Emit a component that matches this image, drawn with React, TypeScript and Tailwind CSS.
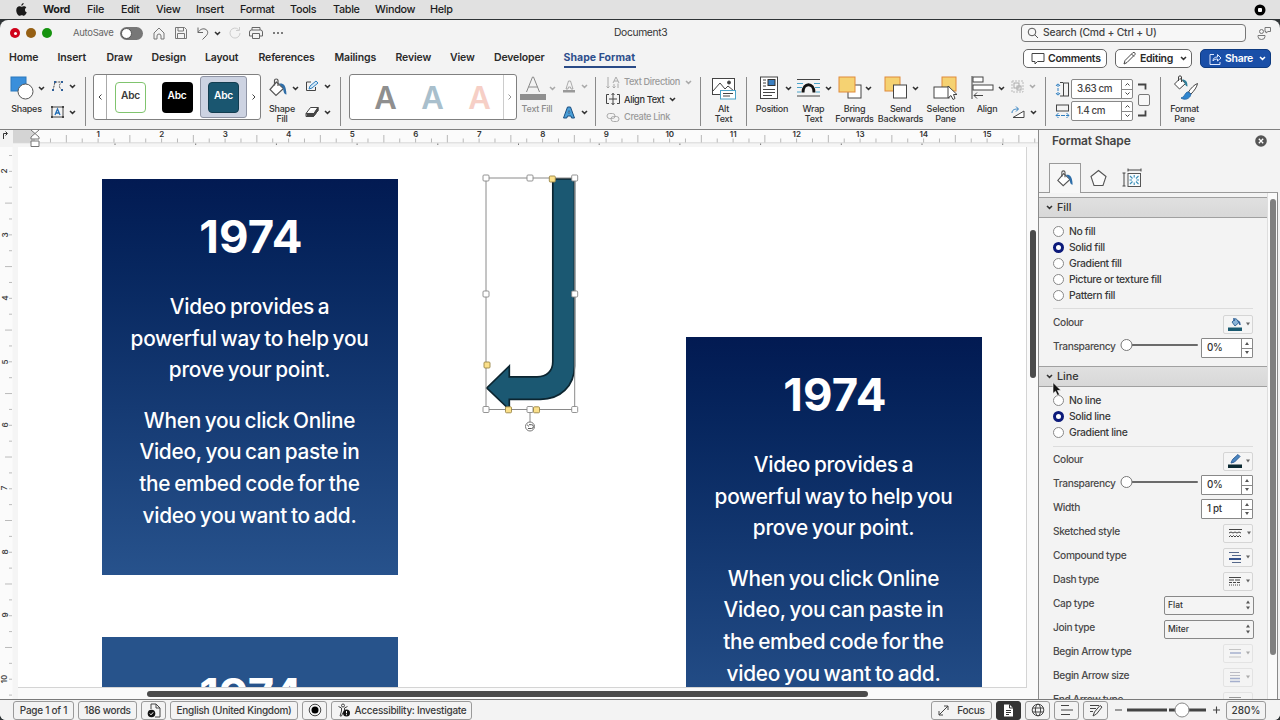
import type { ReactNode } from "react";

const cx = (...c: (string | undefined | false)[]) => c.filter(Boolean).join(" ");

function Svg({ w, h, children, className }: { w: number; h: number; children: ReactNode; className?: string }) {
  return (
    <svg width={w} height={h} viewBox={`0 0 ${w} ${h}`} fill="none" stroke="#444" strokeWidth="1" className={cx("shrink-0 block", className)}>
      {children}
    </svg>
  );
}

function Chev({ c = "#333", className }: { c?: string; className?: string }) {
  return (
    <Svg w={7} h={5} className={className}>
      <path d="M1 1l2.500 2.400L6 1" stroke={c} strokeWidth="1.500" />
    </Svg>
  );
}

/* ---------- menu bar ---------- */
const menus: [string, string][] = [
  ["Word", "w-[44px] font-bold"], ["File", "w-[34px]"], ["Edit", "w-[35px]"], ["View", "w-[40px]"],
  ["Insert", "w-[44px]"], ["Format", "w-[50px]"], ["Tools", "w-[43px]"], ["Table", "w-[42px]"],
  ["Window", "w-[55px]"], ["Help", "w-[30px]"],
];

function MenuBar() {
  return (
    <div className="flex h-[19px] items-center bg-[#e1e1e1] pl-4 text-[10.800px] font-medium tracking-[-0.3px] text-[#1c1c1c]">
      <svg width="11" height="13" viewBox="0 0 22 26" fill="#1a1a1a" className="mr-4">
        <path d="M15.300 0c.2 2.600-2 5.400-4.700 5.400C10.300 2.800 12.700.2 15.300 0zM11.200 7.500c1.200 0 2.600-1.200 4.800-1.200 1.800 0 3.600 1 4.700 2.600-4.100 2.400-3.400 8 .8 9.700-1 2.900-3.300 6.900-5.700 6.900-1.700 0-2.300-1-4.300-1s-2.700 1-4.300 1C4 25.500.5 19.400.5 14.300c0-5.200 3.300-7.900 6.400-7.900 2 0 3.200 1.100 4.300 1.100z" />
      </svg>
      {menus.map(([t, c]) => (
        <span key={t} className={cx("shrink-0 whitespace-nowrap pt-[1px]", c)}>{t}</span>
      ))}
      <Svg w={12} h={12} className="ml-auto mr-[14px]">
        <circle cx="6" cy="6" r="5.500" fill="#000" stroke="none" />
        <rect x="4" y="4" width="4" height="4" rx="1" fill="#fff" stroke="none" />
      </Svg>
    </div>
  );
}

/* ---------- title bar ---------- */
function TitleBar() {
  return (
    <div className="flex h-[26px] items-center pl-[10px]">
      <div className="flex w-[63px] gap-[6px]">
        <span className="flex size-[10px] items-center justify-center rounded-full bg-[#d0021b]"><span className="size-[3px] rounded-full bg-white" /></span>
        <span className="size-[10px] rounded-full bg-[#966014]" />
        <span className="size-[10px] rounded-full bg-[#16930f]" />
      </div>
      <span className="w-[47px] whitespace-nowrap text-[9.500px] tracking-[-0.3px] text-[#666]">AutoSave</span>
      <span className="flex h-[13px] w-[23px] items-center rounded-full bg-[#777] p-px"><span className="size-[11px] rounded-full border border-[#555] bg-white" /></span>
      <Svg w={12} h={13} className="ml-[10px]"><path d="M1 6L6 1l5 5v6H8V9a2 2 0 0 0-4 0v3H1z" stroke="#777" /></Svg>
      <Svg w={12} h={12} className="ml-[10px]"><path d="M.5.500h9l2 2v9H.5zM3 .5v3.500h5.500V.5M2.500 11.500v-5h7v5" stroke="#777" /></Svg>
      <Svg w={12} h={13} className="ml-[10px]"><path d="M1 .5V5.500h5M1 5.500C3 2 6.500 1 9 2.500c2.500 1.700 2 4.500 0 6.500l-3.500 3.500" stroke="#666" /></Svg>
      <Chev className="ml-[5px]" />
      <Svg w={12} h={12} className="ml-[8px]"><path d="M9.500 2.500A5 5 0 1 0 11 6M10.500 0v3.500H7" stroke="#ccc" /></Svg>
      <Svg w={14} h={12} className="ml-[8px]"><path d="M3 3V.5h8V3M3 9H.5V5a2 2 0 0 1 2-2h9a2 2 0 0 1 2 2v4H11M3.500 6.500h7v5h-7z" stroke="#666" /></Svg>
      <Svg w={12} h={4} className="ml-[9px]"><path d="M1 2h2M5 2h2M9 2h2" strokeWidth="1.600" stroke="#555" /></Svg>
      <span className="ml-[330px] w-[60px] whitespace-nowrap text-[10.300px] tracking-[-0.35px] text-[#333]">Document3</span>
      <div className="ml-[347px] flex h-[18px] w-[225px] items-center rounded border border-[#777] bg-[#f7f7f7] pl-[5px] text-[10.300px] font-medium tracking-[-0.2px] text-[#444]">
        <Svg w={12} h={12} className="mr-[4px]"><circle cx="5" cy="5" r="3.800" stroke="#555" /><path d="M7.800 7.800L11 11" stroke="#555" /></Svg>
        Search (Cmd + Ctrl + U)
      </div>
      <Svg w={15} h={14} className="ml-[11px]">
        <circle cx="4.500" cy="5.500" r="2" stroke="#777" /><path d="M1 9.500h7v1a3.500 3 0 0 1-7 0zM8 1.500h5.500v4H11L9 7V5.500H8z" stroke="#777" />
      </Svg>
    </div>
  );
}

const tabs: [string, string][] = [
  ["Home", "w-[48.500px]"], ["Insert", "w-[49px]"], ["Draw", "w-[45px]"], ["Design", "w-[53.500px]"], ["Layout", "w-[53.500px]"],
  ["References", "w-[76px]"], ["Mailings", "w-[61px]"], ["Review", "w-[54.500px]"], ["View", "w-[44px]"], ["Developer", "w-[69.500px]"],
];

function TabRow() {
  return (
    <div className="flex h-[24px] items-start pl-[9px] text-[10.500px] font-semibold tracking-[-0.15px] text-[#2a2a2a]">
      {tabs.map(([t, c]) => (
        <span key={t} className={cx("shrink-0 whitespace-nowrap pt-[4px]", c)}>{t}</span>
      ))}
      <span className="h-[22px] w-[72px] whitespace-nowrap border-b-2 border-[#2a4a86] pt-[4px] font-bold tracking-[0.05px] text-[#2d4e8c]">Shape Format</span>
      <div className="ml-auto mr-[9px] flex gap-[8px] pt-[3px] tracking-[-0.3px]">
        <span className="flex h-[19px] w-[84px] items-center rounded-[5px] border border-[#666] bg-white pl-[7px]">
          <Svg w={14} h={13} className="mr-[3px]"><path d="M1 1.500h12v8H6.500L4 12V9.500H1z" /></Svg>Comments
        </span>
        <span className="flex h-[19px] w-[77px] items-center rounded-[5px] border border-[#666] bg-white pl-[7px]">
          <Svg w={13} h={13} className="mr-[4px]"><path d="M1 12l1-3.500 8-8c1.500-.5 2.500.500 2 2l-8 8zM8.500 2l2.500 2.500" /></Svg>Editing<Chev className="ml-[7px]" />
        </span>
        <span className="flex h-[19px] w-[71px] items-center rounded-[5px] border border-[#0e3a80] bg-[#1a4fa8] pl-[8px] text-white">
          <Svg w={13} h={12} className="mr-[3px]"><path d="M5 1.500H1v10h10V9M4 8c0-3 2-4 4.500-4V1.500L12 5 8.500 8V6C6.500 6 5 6.500 4 8z" stroke="#dfe8ff" /></Svg>Share<Chev c="#fff" className="ml-[6px]" />
        </span>
      </div>
    </div>
  );
}

/* ---------- ribbon ---------- */
function Big({ w, pad, icon, chev, lines, dim }: { w: string; pad: string; icon: ReactNode; chev?: string; lines: string[]; dim?: boolean }) {
  return (
    <div className={cx("flex shrink-0 flex-col", w)}>
      <div className={cx("flex h-[28px] items-center", pad)}>
        {icon}
        {chev && <Chev className={chev} c={dim ? "#aaa" : "#333"} />}
      </div>
      <div className={cx("flex flex-col items-center pt-[2px] text-[9px] font-medium leading-[9.500px] tracking-[-0.25px]", dim ? "text-[#8c8c8c]" : "text-[#333]")}>
        {lines.map((l) => <span key={l} className="whitespace-nowrap">{l}</span>)}
      </div>
    </div>
  );
}

function Pair({ w, top, bottom, dimTop }: { w: string; top: ReactNode; bottom: ReactNode; dimTop?: boolean }) {
  return (
    <div className={cx("flex shrink-0 flex-col", w)}>
      <div className="flex h-[26px] items-center gap-[5px] pb-[2px]">{top}<Chev c={dimTop ? "#aaa" : "#333"} /></div>
      <div className="flex h-[24px] items-center gap-[5px]">{bottom}<Chev /></div>
    </div>
  );
}

const Sep = () => <span className="mt-[3px] h-[49px] w-px shrink-0 bg-[#8a8a8a]" />;

function Bucket({ s }: { s: number }) {
  return (
    <svg width={s} height={s} viewBox="0 0 20 20" fill="none" className="shrink-0">
      <path d="M8.500 4L2 11.500l6 6 7.500-7L8.500 4z" fill="#fff" stroke="#555" strokeWidth="1.200" />
      <path d="M6.500 7.500V2.500c0-2 3.500-2 3.500 0V8" stroke="#555" strokeWidth="1.200" />
      <path d="M11 5.500c4-.5 7 .5 7.500 11-3-.5-3-4-3.500-6.500z" fill="#2f6ea8" />
    </svg>
  );
}

function WordArt({ c }: { c: string }) {
  return <span className={cx("w-[47px] text-center text-[31px] font-semibold leading-none", c)}>A</span>;
}

function Spin({ v }: { v: string }) {
  return (
    <div className="flex h-[20px] w-[62px] rounded-[2px] border border-[#888] bg-white">
      <span className="flex flex-1 items-center whitespace-nowrap pl-[5px] text-[9.800px] font-medium tracking-[-0.4px] text-[#444]">{v}</span>
      <span className="flex w-[11px] flex-col border-l border-[#888]">
        <span className="flex flex-1 items-center justify-center border-b border-[#888]"><Svg w={5} h={3}><path d="M.5 2.500l2-2 2 2" /></Svg></span>
        <span className="flex flex-1 items-center justify-center"><Svg w={5} h={3}><path d="M.5.500l2 2 2-2" /></Svg></span>
      </span>
    </div>
  );
}

function Ribbon() {
  return (
    <div className="flex h-[59px] items-start pt-[4px]">
      <div className="w-[46px] shrink-0 pl-[3px]">
        <Big w="w-[47px]" pad="pl-[7px]" lines={["Shapes"]} chev="ml-[4px]" icon={
          <Svg w={24} h={24}><rect x="1" y="1" width="15" height="14" fill="#3a8fdb" stroke="#2a78bd" /><circle cx="15.500" cy="15.500" r="7.500" fill="#fff" stroke="#555" /></Svg>} />
      </div>
      <Pair w="w-[39px] pl-[5px]"
        top={<Svg w={13} h={12}><path d="M2 10.500L4 2h7c-4 3-3 6 .5 8.500" strokeDasharray="2 1" /><path d="M1 10h2M3 2h2M10 2h2M10 10h2" stroke="#2f5f98" strokeWidth="2" /></Svg>}
        bottom={<Svg w={13} h={12}><rect x="1" y="1" width="11" height="10" /><path d="M4 9l2.500-6L9 9M5 7h3" stroke="#2470b8" strokeWidth="1.300" /><path d="M0 1h2M11 1h2M0 11h2M11 11h2" strokeWidth="2" /></Svg>} />
      <Sep />
      <div className="ml-[7px] flex h-[46px] w-[168px] shrink-0 items-stretch overflow-hidden rounded-[3px] border border-[#808080] bg-white text-[10.200px] font-semibold tracking-[-0.2px]">
        <span className="flex w-[13px] items-center justify-center border-r border-[#aaa]"><Svg w={4} h={6}><path d="M3.500.500L1 3l2.500 2.500" /></Svg></span>
        <span className="flex w-[47px] items-center justify-center"><span className="flex size-[31px] items-center justify-center rounded-[4px] border border-[#80c46e] pb-[3px] text-[#3a3a3a]">Abc</span></span>
        <span className="flex w-[46px] items-center justify-center"><span className="flex size-[31px] items-center justify-center rounded-[4px] bg-black pb-[3px] text-white">Abc</span></span>
        <span className="my-px flex w-[47px] items-center justify-center rounded-[3px] border border-[#9095a5] bg-[#cdd3e2]"><span className="flex size-[31px] items-center justify-center rounded-[4px] border border-[#123d50] bg-[#1a5670] pb-[3px] text-white">Abc</span></span>
        <span className="flex flex-1 items-center justify-center"><Svg w={4} h={6}><path d="M.5.500L3 3 .5 5.500" /></Svg></span>
      </div>
      <Big w="w-[44px] pr-[2px]" pad="pl-[7px]" lines={["Shape", "Fill"]} chev="ml-[4px]" icon={<Bucket s={20} />} />
      <Pair w="w-[35px]"
        top={<Svg w={14} h={12}><path d="M6 2H1.500v8.500h9V7" /><path d="M4 9l1-3 6-5 2 2-6 5z" fill="#d6e8f5" stroke="#2f7fc0" /></Svg>}
        bottom={<Svg w={14} h={12}><path d="M1 7.500L5.500 1.500h7.500L9 7.500zM1 7.500v3h7.500L13 4.500v-3" fill="#fff" /><path d="M9 7.500l4-6v3l-4.500 6H2v-3z" fill="#444" /></Svg>} />
      <Sep />
      <div className="ml-[8px] flex h-[46px] w-[168px] shrink-0 items-stretch overflow-hidden rounded-[3px] border border-[#808080] bg-white">
        <div className="flex flex-1 items-center pl-[12px] pt-px">
          <WordArt c="text-[#8f8f8f]" />
          <WordArt c="text-[#a9bfcc]" />
          <WordArt c="text-[#f6cfc6]" />
        </div>
        <span className="flex w-[13px] items-center justify-center border-l border-[#ccc]"><Svg w={4} h={6}><path d="M.5.500L3 3 .5 5.500" stroke="#999" /></Svg></span>
      </div>
      <Big w="w-[42px] pr-[2px]" pad="pl-[3px]" lines={["Text Fill"]} dim chev="ml-[3px]" icon={
        <Svg w={26} h={26}><path d="M6.500 17L12.500 2h1l6 15M8.500 12h9" stroke="#8a8a8a" /><rect x="0" y="19" width="26" height="6" fill="#8f8f8f" stroke="none" /></Svg>} />
      <Pair w="w-[36px] pl-[3px]" dimTop
        top={<Svg w={14} h={14}><path d="M4 10L6.500 2h2L11 10H9L8.500 8h-2L6 10z" stroke="#999" strokeWidth=".8" /><rect x="1" y="11" width="12" height="2.500" fill="#999" stroke="none" /></Svg>}
        bottom={<Svg w={14} h={13}><path d="M1.500 12L5.500 1h3l4 11h-3L9 10H5.500l-.7 2z" fill="#4a9fd8" stroke="#1d4f80" /><path d="M6 7h2L7 4.500z" fill="#fff" stroke="#1d4f80" strokeWidth=".7" /></Svg>} />
      <Sep />
      <div className="flex w-[104px] shrink-0 flex-col pl-[10px] text-[9.200px] font-medium tracking-[-0.35px] text-[#9a9a9a]">
        <div className="flex h-[16px] items-center"><Svg w={14} h={13} className="mr-[4px]"><path d="M2 1v11M.5 10.500L2 12l1.500-1.500M12 12V7.500M7 7l3-6 3 6M8 5h4M8 8v4M6.500 10.500L8 12l1.500-1.500" stroke="#aaa" /></Svg>Text Direction<Chev c="#aaa" className="ml-[5px]" /></div>
        <div className="flex h-[19px] items-center text-[#2f2f2f]"><Svg w={14} h={13} className="mr-[4px]"><path d="M3 1.500H.5v9H3M11 1.500h2.500v9H11M3 6h8M7 0v12M5.500 2L7 .5 8.500 2M5.500 10L7 11.500 8.500 10" /></Svg>Align Text<Chev className="ml-[5px]" /></div>
        <div className="flex h-[16px] items-center"><Svg w={14} h={11} className="mr-[4px]"><rect x="1" y="1.500" width="8" height="5" rx="2.500" stroke="#aaa" /><rect x="5" y="4.500" width="8" height="5" rx="2.500" stroke="#aaa" /></Svg>Create Link</div>
      </div>
      <Sep />
      <Big w="w-[45px]" pad="pl-[11px]" lines={["Alt", "Text"]} icon={
        <Svg w={25} h={24}><rect x=".5" y="2.500" width="22" height="16" fill="#fff" /><path d="M1 15l7-8 5 6 3-3 6 5" /><circle cx="17" cy="6.500" r="1.500" fill="#444" /><rect x="8.500" y="14.500" width="15" height="8.500" fill="#fff" stroke="#4aa3c8" /><path d="M11 17.500h10M11 20h7" /></Svg>} />
      <Sep />
      <Big w="w-[50px]" pad="pl-[13px]" lines={["Position"]} chev="ml-[6px]" icon={
        <Svg w={19} h={24}><rect x=".5" y="1" width="17" height="21.500" fill="#fff" /><path d="M3 4h3M3 7h3M3 10h3M3 13.500h12M3 16.500h12M3 19.500h9" /><rect x="8" y="3.500" width="7" height="6" fill="#3b7fc0" stroke="#333" /></Svg>} />
      <Big w="w-[33px]" pad="pl-[0px]" lines={["Wrap", "Text"]} chev="ml-[5px]" icon={
        <Svg w={23} h={20}><path d="M0 1.500h23M0 18h23" /><path d="M0 5.500h6M17 5.500h6M0 9.500h5M18 9.500h5M0 14h4M19 14h4" stroke="#4aa3c8" /><path d="M6 14.500C6 4 17 4 17 14.500" stroke="#111" strokeWidth="3" /></Svg>} />
      <Big w="w-[49px]" pad="pl-[8px]" lines={["Bring", "Forwards"]} chev="ml-[3px]" icon={
        <Svg w={24} h={24}><rect x="10" y="9" width="13" height="13" fill="#fff" /><rect x="1" y="1" width="16" height="15" fill="#f5d272" stroke="#e08a3a" /></Svg>} />
      <Big w="w-[43px]" pad="pl-[5px]" lines={["Send", "Backwards"]} chev="ml-[4px]" icon={
        <Svg w={24} h={24}><rect x="1" y="1" width="15" height="14" fill="#f5d272" stroke="#e08a3a" /><rect x="9.500" y="9" width="13" height="13" fill="#fff" /></Svg>} />
      <Big w="w-[47px]" pad="pl-[11px]" lines={["Selection", "Pane"]} icon={
        <Svg w={25} h={24}><rect x="9" y="1" width="14" height="14" fill="#f5d272" stroke="#e08a3a" /><rect x="1" y="11" width="15" height="11" fill="#fff" /><path d="M15 10v12l3-2.500 2 4 2-1-1.500-4h3.500z" fill="#fff" /></Svg>} />
      <Big w="w-[36px]" pad="pl-[2px]" lines={["Align"]} chev="ml-[4px]" icon={
        <Svg w={23} h={24}><path d="M1 0v23" /><rect x="2" y="1" width="10" height="5" fill="#fff" /><rect x="2" y="9" width="20" height="5" fill="#fff" /><path d="M3 19.500h9M6 16.500l-3 3 3 3" /></Svg>} />
      <Pair w="w-[40px] pl-[6px]" dimTop
        top={<Svg w={13} h={13}><path d="M1 1h11v11H1z" stroke="#bbb" strokeDasharray="2 1" /><rect x="3" y="3" width="5" height="5" stroke="#aaa" /><rect x="6" y="6" width="4" height="4" stroke="#aaa" /></Svg>}
        bottom={<Svg w={14} h={13}><path d="M2 11.500h11V5z" fill="#fff" /><path d="M1 7c0-3 2-4 6-4M5 .5L7.500 3 5 5.500" stroke="#2f7fc0" /></Svg>} />
      <Sep />
      <div className="ml-[9px] flex shrink-0 gap-x-px pt-[5px]">
        <div className="flex flex-col gap-[7px] pt-[3px]">
          <Svg w={15} h={15}><path d="M3 2v11M1 4l2-2.500L5 4M1 11l2 2.500L5 11" stroke="#2f7fc0" strokeDasharray="3 1" /><rect x="8.500" y="1" width="5" height="13" /><path d="M5 .5h3M5 14h3" /></Svg>
          <Svg w={15} h={15}><rect x="1.500" y="1" width="12" height="6" /><path d="M1 11.500h13M3.500 9L1 11.500 3.500 14M11.500 9l2.500 2.500-2.500 2.500" stroke="#2f7fc0" strokeDasharray="4 1" /></Svg>
        </div>
        <div className="flex flex-col gap-[2px]"><Spin v="3.63 cm" /><Spin v="1.4 cm" /></div>
        <div className="flex flex-col items-start gap-[3px] pl-[4px] pt-[4px]">
          <Svg w={9} h={8}><path d="M0 1.500h7.500v5" strokeWidth="1.800" /></Svg>
          <span className="size-[12px] rounded-[2px] border border-[#777] bg-[#f7f7f7]" />
          <Svg w={9} h={8}><path d="M0 6.500h7.500v-5" strokeWidth="1.800" /></Svg>
        </div>
      </div>
      <span className="w-[10px]" />
      <Sep />
      <Big w="w-[47px]" pad="pl-[12px]" lines={["Format", "Pane"]} icon={
        <Svg w={26} h={26}><path d="M7 3.500L1.500 9l5 5 6-5.500L7 3.500z" fill="#fff" /><path d="M5.500 6V2c0-1.500 3-1.500 3 0v5" /><path d="M9 4.500c4 0 5.500 2 5.500 7-2-.5-2.500-2-3-4z" fill="#2f7f9a" stroke="none" /><path d="M24.500 8.500c-3 1-7 5-9 8.500l2.500 2c3-3 6-7 6.500-10.500z" fill="#fff" /><path d="M15 17c-3 0-3 5-7 6 4 2.500 9 1 10-4z" fill="#2f86cf" stroke="#2a6ba8" /></Svg>} />
    </div>
  );
}

/* ---------- rulers ---------- */
const HR_NUMS = Array.from({ length: 15 }, (_, i) => i + 1);
const VR_NUMS = [2, 3, 4, 5, 6, 7, 8, 9, 10];

function HRuler() {
  const ticks: ReactNode[] = [];
  for (let i = 1; i < 64; i++) {
    const x = 34.600 + (i * 63.500) / 4;
    if (x > 1036) break;
    ticks.push(<path key={i} d={`M${x} ${i % 4 === 2 ? 5 : 8.500}V12.500`} stroke="#b8b8b8" />);
  }
  const stops: ReactNode[] = [];
  for (let i = 1; i < 13; i++) stops.push(<path key={i} d={`M${34.300 + i * 80.700} 13.500v1.500`} stroke="#777" />);
  return (
    <div className="relative h-[17px] shrink-0 overflow-hidden bg-[#fbfbfb]">
      <Svg w={1038} h={17} className="absolute inset-0">
        <rect x="0" y="13" width="1038" height="4" fill="#f5f5f5" stroke="none" />
        <rect x="0" y="0" width="13" height="17" fill="#f3f3f3" stroke="none" />
        <rect x="13" y="0" width="22" height="13" fill="#d4d4d4" stroke="none" />
        <path d="M13 12.800H1038" stroke="#d8d8d8" />
        {ticks}{stops}
        <path d="M3.500 9V3.500H7M5.500 1.500l2 2-2 2" stroke="#333" />
        <path d="M31 0l8 7v2h-8V7l8-7M31 11h8v5.500h-8z" fill="#fff" stroke="#777" />
      </Svg>
      <div className="relative ml-[66.500px] flex text-[8px] font-semibold leading-[8px] text-[#333]">
        {HR_NUMS.map((n) => <span key={n} className="w-[63.500px] shrink-0 text-center">{n}</span>)}
      </div>
    </div>
  );
}

function VRuler() {
  const ticks: ReactNode[] = [];
  for (let i = 0; i < 35; i++) {
    const y = 8.500 + i * 15.870;
    ticks.push(<path key={i} d={`M${i % 4 === 3 ? 5 : 9} ${y}H12`} stroke="#bbb" />);
  }
  return (
    <div className="relative w-[18px] shrink-0 overflow-hidden bg-[#f5f5f5]">
      <Svg w={18} h={552} className="absolute inset-0">
        <rect x="0" y="0" width="12.500" height="552" fill="#fbfbfb" stroke="none" />
        {ticks}
      </Svg>
      <div className="relative -mt-[7.500px] flex w-[9px] flex-col text-[8px] font-semibold text-[#444]">
        {VR_NUMS.map((n) => (
          <span key={n} className="flex h-[63.450px] w-[9px] shrink-0 items-center justify-center"><span className="-rotate-90">{n}</span></span>
        ))}
      </div>
    </div>
  );
}

/* ---------- document ---------- */
function Card({ className, short }: { className: string; short?: boolean }) {
  return (
    <div className={cx("absolute w-[296px] overflow-hidden text-center text-white", short ? "h-[60px]" : "h-[396px]", className)}>
      <div className="pl-[2px] pt-[30px] text-[45.500px] font-bold leading-[56px] tracking-[0.2px]">1974</div>
      {!short && (
        <div className="pr-[1px] pt-[26px] text-[20.800px] font-medium leading-[31.700px] tracking-[-0.27px] [word-spacing:-1.400px]">
          <p>Video provides a<br />powerful way to help you<br />prove your point.</p>
          <p className="pt-[18.500px]">When you click Online<br />Video, you can paste in<br />the embed code for the<br />video you want to add.</p>
        </div>
      )}
    </div>
  );
}

function Handle({ x, y, c = "#fff" }: { x: number; y: number; c?: string }) {
  return <rect x={x - 3} y={y - 3} width="6" height="6" rx="1" fill={c} stroke={c === "#fff" ? "#888" : "#9a8648"} strokeWidth=".9" />;
}

function ArrowShape() {
  return (
    <svg width="110" height="270" viewBox="470 167 110 270" fill="none" className="absolute left-[452px] top-[20px]">
      <path d="M552.800 178.800H574.500V366c0 20-14 33.300-34 33.300H509.300v10.200L486.800 388l22.500-22V376.800H537c10 0 15.800-6 15.800-15z" fill="#1b5872" stroke="#0c2530" strokeWidth="1.700" />
      <path d="M486 178H574.700V409.500H486zM530 410v12" stroke="#8a8a8a" />
      <Handle x={486} y={178} /><Handle x={530} y={178} /><Handle x={574.700} y={178} />
      <Handle x={486} y={294} /><Handle x={574.700} y={294} />
      <Handle x={486} y={409.500} /><Handle x={530} y={409.500} /><Handle x={574.700} y={409.500} />
      <Handle x={552.300} y={179} c="#fbe08a" /><Handle x={487} y={365} c="#fbe08a" />
      <Handle x={508.500} y={409.800} c="#fbe08a" /><Handle x={536.500} y={409.800} c="#fbe08a" />
      <circle cx="530" cy="426.500" r="4.500" fill="#fff" stroke="#777" />
      <path d="M528 428.500h3.500a1.800 1.800 0 0 0 0-3.800H529M528.500 426.500l-1-1.800" stroke="#555" />
    </svg>
  );
}

function Document() {
  return (
    <div className="flex min-h-0 flex-1">
      <VRuler />
      <div className="flex w-[1020px] flex-col bg-[#f6f6f6]">
        <div className="flex h-[541px]">
          <div className="relative w-[1009px] overflow-hidden border-b border-r border-[#d4d4d4] bg-white">
            <Card className="left-[84px] top-[32px] bg-linear-to-b from-[#021a52] to-[#27528c]" />
            <Card className="left-[668px] top-[190px] bg-linear-to-b from-[#021a52] to-[#27528c]" />
            <Card short className="left-[84px] top-[490px] bg-[#27538b]" />
            <ArrowShape />
          </div>
          <div className="flex flex-1 justify-center bg-[#fafafa] pt-[83px]"><span className="h-[148px] w-[6px] rounded-full bg-[#4b4b4b]" /></div>
        </div>
        <div className="flex flex-1 items-center bg-[#fafafa] pl-[129px]"><span className="h-[6px] w-[721px] rounded-full bg-[#4b4b4b]" /></div>
      </div>
    </div>
  );
}

/* ---------- format pane ---------- */
function Head({ t }: { t: string }) {
  return (
    <div className="flex h-[21px] shrink-0 items-center border-y border-[#a0a0a0] bg-linear-to-b from-[#e0e0e0] to-[#d8d8d8] pl-[7px] text-[10.800px] font-medium text-[#333]">
      <Chev className="mr-[4px]" /><span className="pt-px">{t}</span>
    </div>
  );
}

function Radio({ t, on }: { t: string; on?: boolean }) {
  return (
    <div className="flex h-[16px] items-center text-[10.400px] font-medium tracking-[-0.35px] text-[#3a3a3a]">
      <span className={cx("mr-[5px] mt-[1px] size-[11px] shrink-0 rounded-full bg-white", on ? "border-[3.500px] border-[#0c1a7a]" : "border border-[#888]")} />
      <span className="pt-px">{t}</span>
    </div>
  );
}

function Row({ t, dim, children }: { t: string; dim?: boolean; children: ReactNode }) {
  return (
    <div className="flex h-[24px] shrink-0 items-center text-[10.200px] font-medium tracking-[-0.37px] text-[#4a4a4a]">
      <span className="mr-auto whitespace-nowrap pb-px">{t}</span>
      <div className={cx("flex items-center pt-[2px]", dim && "opacity-50")}>{children}</div>
    </div>
  );
}

function IconBtn({ children }: { children: ReactNode }) {
  return (
    <span className="flex h-[19px] w-[30px] items-center rounded-[2px] border border-[#d5d5d5] bg-[#f5f5f5] pl-[4px]">
      {children}
      <Svg w={4} h={4} className="ml-[4px]"><path d="M0 .5h4L2 3.500z" fill="#666" stroke="none" /></Svg>
    </span>
  );
}

function Num({ v }: { v: string }) {
  return (
    <span className="flex h-[20px] w-[52px] rounded-[1px] border border-[#888] bg-white text-[9.800px] tracking-[-0.3px] text-[#333]">
      <span className="flex flex-1 items-center pl-[5px] pt-px">{v}</span>
      <span className="flex w-[11px] flex-col border-l border-[#888]">
        <span className="flex flex-1 items-center justify-center border-b border-[#888]"><Svg w={4} h={3}><path d="M0 3h4L2 0z" fill="#555" stroke="none" /></Svg></span>
        <span className="flex flex-1 items-center justify-center"><Svg w={4} h={3}><path d="M0 0h4L2 3z" fill="#555" stroke="none" /></Svg></span>
      </span>
    </span>
  );
}

const Slider = () => (
  <Svg w={78} h={14} className="-mt-[6px] mr-[3px]"><path d="M12 7h65" stroke="#6a6a6a" strokeWidth="2" strokeLinecap="round" /><circle cx="6.500" cy="7" r="5.500" fill="#fff" stroke="#777" /></Svg>
);

function Select({ v }: { v: string }) {
  return (
    <span className="-mr-px flex h-[19px] w-[90px] items-center rounded-[2px] border border-[#888] bg-[#f4f4f4] pl-[3px] text-[8.500px] tracking-normal text-[#333]">
      {v}<Svg w={4} h={10} className="ml-auto mr-[3px]"><path d="M0 3.500h4L2 .5zM0 6.500h4L2 9.500z" fill="#555" stroke="none" /></Svg>
    </span>
  );
}

function Pane() {
  return (
    <div className="flex w-[240px] shrink-0 flex-col border-l border-[#8a8a8a] bg-[#f3f3f3]">
      <div className="flex h-[22px] items-center justify-between pl-[13px] pr-[11px] text-[12px] font-semibold tracking-[-0.15px] text-[#444]">
        Format Shape
        <Svg w={12} h={12}><circle cx="6" cy="6" r="5.800" fill="#555" stroke="none" /><path d="M3.800 3.800l4.400 4.400M8.200 3.800L3.800 8.200" stroke="#fff" strokeWidth="1.300" /></Svg>
      </div>
      <div className="flex h-[41px] items-end pt-[11px]">
        <span className="h-full w-[10px] border-b border-[#9a9a9a]" />
        <span className="flex h-[30px] w-[32px] items-center justify-center border border-b-0 border-[#9a9a9a] bg-[#f7f7f7]"><Bucket s={18} /></span>
        <div className="flex h-[30px] flex-1 items-center gap-[15px] border-b border-[#9a9a9a] pl-[9px]">
          <Svg w={17} h={18}><path d="M8.500 1.500l7.500 6-3 9H4l-3-9z" fill="#fafafa" stroke="#555" strokeWidth="1.100" /></Svg>
          <Svg w={20} h={20}><path d="M6 2h13M6 .5v3M19 .5v3M2 5v13M.5 5h3M.5 18h3" /><rect x="6" y="5.500" width="12.500" height="13" stroke="#555" fill="#f7fbfd" /><path d="M8 8l2.500 2.500M16.500 8L14 10.500M8 16l2.500-2.500M16.500 16L14 13.500M12.200 7v2.500M12.200 17v-2.500M7.500 12H10M17 12h-2.500" stroke="#3a8fb8" strokeWidth="1.100" /></Svg>
        </div>
      </div>
      <div className="flex min-h-0 flex-1">
        <div className="flex w-[229px] flex-col overflow-hidden border-r border-[#dedede] pt-[4px]">
          <Head t="Fill" />
          <div className="flex h-[148px] shrink-0 flex-col pl-[14px] pr-[14px] pt-[5px]">
            <Radio t="No fill" /><Radio t="Solid fill" on /><Radio t="Gradient fill" /><Radio t="Picture or texture fill" /><Radio t="Pattern fill" />
            <div className="mt-[5px] border-t border-[#dcdcdc] pt-[2px]">
              <Row t="Colour"><IconBtn><Svg w={14} h={14}><path d="M4 5l4-3.500 3 4-4 3.500z" fill="#8ab4d8" stroke="#3a6a98" /><path d="M10 4c2 1 2 3 2 4M6 4V1" stroke="#2f5f98" strokeWidth="1.500" /><rect x="0" y="10.500" width="14" height="3.500" fill="#1a5a70" stroke="none" /></Svg></IconBtn></Row>
              <Row t="Transparency"><Slider /><Num v="0%" /></Row>
            </div>
          </div>
          <Head t="Line" />
          <div className="flex flex-col pl-[14px] pr-[14px] pt-[5px]">
            <Radio t="No line" /><Radio t="Solid line" on /><Radio t="Gradient line" />
            <div className="mt-[6px] border-t border-[#dcdcdc] pt-[1px]">
              <Row t="Colour"><IconBtn><Svg w={14} h={14}><path d="M3 9l1.500-3.500L10 .5l2 2L6.500 8z" fill="#4a86c0" stroke="#2f5f98" /><rect x="0" y="10.500" width="14" height="3.500" fill="#0c2a33" stroke="none" /></Svg></IconBtn></Row>
              <Row t="Transparency"><Slider /><Num v="0%" /></Row>
              <Row t="Width"><Num v="1 pt" /></Row>
              <Row t="Sketched style"><IconBtn><Svg w={15} h={12}><path d="M1 2.500h13M1 6l2-1 2 1 2-1 2 1 2-1 2 1M1 10l1.500-1.500L4 10l1.500-1.500L7 10l1.500-1.500L10 10l1.500-1.500L13 10" /></Svg></IconBtn></Row>
              <Row t="Compound type"><IconBtn><Svg w={14} h={12}><path d="M1 1.500h10M4 4.500h9M4 11.500h9" stroke="#56688a" /><path d="M1 8h12" stroke="#33508a" strokeWidth="2" /></Svg></IconBtn></Row>
              <Row t="Dash type"><IconBtn><Svg w={14} h={12}><path d="M1 2.500h12" /><path d="M1 5h12" strokeDasharray="5 1" /><path d="M1 7.500h12" strokeDasharray="3 1" /><path d="M1 10h12" strokeDasharray="1 1" /></Svg></IconBtn></Row>
              <Row t="Cap type"><Select v="Flat" /></Row>
              <Row t="Join type"><Select v="Miter" /></Row>
              <Row t="Begin Arrow type" dim><IconBtn><Svg w={14} h={12}><path d="M1 2.500h12M1 10h12" stroke="#999" /><path d="M2 6h11" stroke="#5a6ea8" strokeWidth="1.500" /></Svg></IconBtn></Row>
              <Row t="Begin Arrow size" dim><IconBtn><Svg w={14} h={12}><path d="M2 1.500h10M2 4.500h10" stroke="#889" /><path d="M2 7.500h10M2 10.500h10" stroke="#5a6ea8" strokeWidth="1.500" /></Svg></IconBtn></Row>
              <Row t="End Arrow type" dim><IconBtn><Svg w={14} h={12}><path d="M1 2.500h12" /></Svg></IconBtn></Row>
            </div>
          </div>
        </div>
        <div className="flex flex-1 justify-center border-r border-[#8a8a8a] bg-[#fafafa] pl-px pt-[6px]"><span className="h-[456px] w-[6px] rounded-full bg-[#808080]" /></div>
      </div>
    </div>
  );
}

/* ---------- status bar ---------- */
function SB({ c, children }: { c: string; children: ReactNode }) {
  return <span className={cx("flex h-[19px] shrink-0 items-center justify-center whitespace-nowrap rounded-[3px] border border-[#9a9a9a]", c)}>{children}</span>;
}

function StatusBar() {
  return (
    <div className="flex h-[21px] shrink-0 items-center gap-[4px] border-t border-[#7a7a7a] bg-[#f3f3f3] pl-[13px] text-[10px] font-medium tracking-[-0.27px] text-[#3a3a3a]">
      <SB c="w-[61px]">Page 1 of 1</SB>
      <SB c="w-[59px]">186 words</SB>
      <SB c="w-[25px]"><Svg w={14} h={15}><path d="M4 6V1h5l4 4v9H8" /><path d="M9 1v4h4" /><circle cx="4.500" cy="10.500" r="3.800" fill="#111" stroke="none" /><path d="M2.800 10.500L4 11.800l2.200-2.500" stroke="#fff" /></Svg></SB>
      <SB c="w-[128px]">English (United Kingdom)</SB>
      <SB c="w-[25px]"><Svg w={14} h={14}><circle cx="7" cy="7" r="5.800" /><circle cx="7" cy="7" r="3.500" fill="#000" stroke="none" /></Svg></SB>
      <SB c="w-[141px]"><Svg w={14} h={14} className="mr-[4px]"><circle cx="6" cy="2.500" r="1.500" /><path d="M1.500 3.500L4.500 5v3L3 13h1.500L6 9.500M10.500 3.500L7.500 5v2" /><circle cx="9.500" cy="10" r="3.500" fill="#111" stroke="none" /><path d="M9.500 8v2.300M9.500 11.200v1" stroke="#fff" /></Svg>Accessibility: Investigate</SB>
      <SB c="ml-auto w-[61px]"><Svg w={11} h={11} className="mr-[8px]"><path d="M1 10L10 1M6 1h4v4M1 6v4h4" /></Svg>Focus</SB>
      <SB c="w-[25px] bg-[#333] border-[#333]"><Svg w={11} h={13}><path d="M1 .5h5.500L10 4v8.500H1z" fill="#fff" stroke="none" /><path d="M6.500.500V4H10M3 6.500h5M3 8.500h5M3 10.500h3" stroke="#333" /></Svg></SB>
      <SB c="w-[25px]"><Svg w={14} h={14}><circle cx="7" cy="7" r="5.800" /><ellipse cx="7" cy="7" rx="2.600" ry="5.800" /><path d="M1.500 5h11M1.500 9h11" /></Svg></SB>
      <SB c="w-[25px]"><Svg w={14} h={12}><path d="M1 1.500h8M1 6h12M1 10.500h9" /></Svg></SB>
      <SB c="w-[25px]"><Svg w={14} h={13}><path d="M1 1.500h9M1 4.500h6M1 7.500h3" /><path d="M4 12l1.500-4L11 1.500l2 1.500-5.500 7z" /></Svg></SB>
      <Svg w={108} h={16}>
        <path d="M3 8h7M101 8h7M104.500 4.500v7" strokeWidth="1.100" />
        <path d="M15 8h40M57 8h37" stroke="#444" strokeWidth="2.800" />
        <circle cx="70" cy="8" r="7" fill="#fff" stroke="#888" />
      </Svg>
      <SB c="mr-[14px] ml-[2px] w-[40px] tracking-normal">280%</SB>
    </div>
  );
}

export default function App() {
  return (
    <div className="flex h-[720px] w-[1280px] flex-col overflow-hidden bg-[#2f3436] font-['Inter',sans-serif]">
      <MenuBar />
      <div className="mt-px flex min-h-0 flex-1 flex-col overflow-hidden rounded-t-[8px] rounded-b-[6px] bg-[#f3f3f3]">
        <TitleBar />
        <TabRow />
        <Ribbon />
        <div className="flex min-h-0 flex-1 border-t border-[#7f7f7f]">
          <div className="flex w-[1038px] shrink-0 flex-col">
            <HRuler />
            <Document />
          </div>
          <Pane />
        </div>
        <StatusBar />
      </div>
      <svg width="10" height="14" viewBox="0 0 10 14" className="absolute left-[1052px] top-[382px]">
        <path d="M1 .5v11l2.500-2.300 2 4.300 2-1-2-4H9z" fill="#111" stroke="#fff" strokeWidth=".6" />
      </svg>
    </div>
  );
}
